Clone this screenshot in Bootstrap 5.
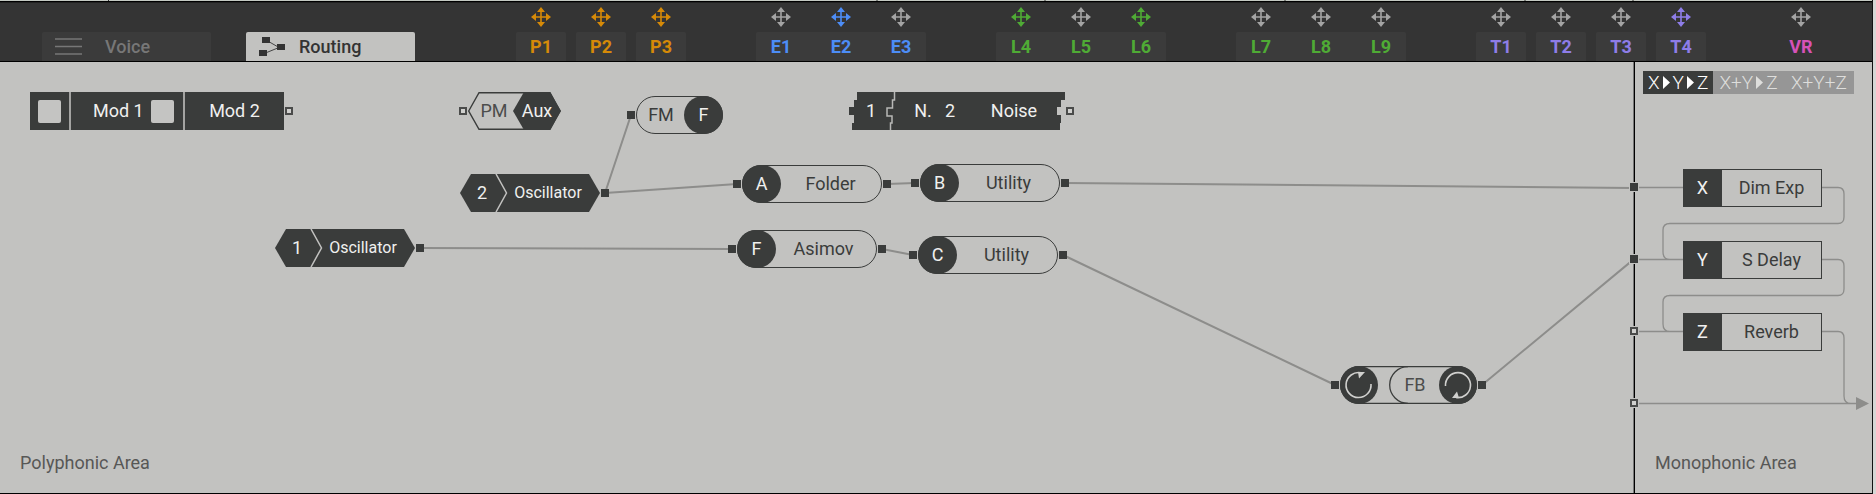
<!DOCTYPE html>
<html lang="en">
<head>
<meta charset="utf-8">
<meta name="viewport" content="width=device-width, initial-scale=1">
<title>Routing</title>
<link href="https://cdn.jsdelivr.net/npm/bootstrap@5.3.0/dist/css/bootstrap.min.css" rel="stylesheet">
<style>
:root { --ink:#3a3c3b; --pale:#c2c2c0; --wire:#8d8d8b; }
body { font-family:Roboto,sans-serif; font-size:18px; line-height:24px; color:var(--ink); background:#d6d6d4; padding-right:3px; }
button { font:inherit; color:inherit; background:none; border:0; padding:0; }
.frame { border-right:1px solid #111; }
.strip { height:2px; background:#c3c8c1; border-bottom:1px solid #000; }
.topbar { display:grid; grid-template-columns:repeat(30,minmax(0,1fr)); padding:0 41px 0 31px; background:#343434; border-top:1px solid #222; border-bottom:1px solid #000; height:60px; }
.pane-tabs { grid-column:1 / span 7; gap:35px; padding:0 36px 0 11px; }
.pane-tab { flex:1 1 0; height:29px; border-radius:2px 2px 0 0; background:#3b3b3b; color:#777; font-weight:500; }
.pane-tab.active { background:var(--pale); color:#333; }
.pane-tab svg { margin:0 23px 0 13px; }
.pane-tab.active svg { margin:0 14px 0 13px; }
.macro { display:flex; flex-direction:column; align-items:center; justify-content:space-between; font-weight:700; font-size:18px; padding-top:4px; }
.macro svg { width:20px; height:20px; color:#a3a3a3; }
.macro.on svg { color:inherit; }
.macro span { align-self:stretch; height:29px; line-height:29px; background:#3b3b3b; margin:0 5px; border-radius:2px 2px 0 0; }
.macro.first span { margin-right:0; padding-right:5px; border-top-right-radius:0; }
.macro.mid span { margin:0; border-radius:0; }
.macro.last span { margin-left:0; padding-left:5px; border-top-left-radius:0; }
.macro.bare span { background:none; }
.c-p { color:#d68a08; } .c-e { color:#4d8df6; } .c-l { color:#4fab35; } .c-t { color:#8e7de8; } .c-v { color:#d552b8; }
.col-p { grid-column-start:9; } .col-e { grid-column-start:13; } .col-l { grid-column-start:17; } .col-l7 { grid-column-start:21; } .col-t { grid-column-start:25; } .col-v { grid-column-start:30; }
.board { border-bottom:1px solid #000; }
.poly, .mono { background:var(--pale); min-height:431px; }
.poly { border-right:1px solid #777; overflow:hidden; }
.mono { width:238px; border-left:1px solid #000; }
.cables { position:absolute; left:0; top:0; width:1640px; height:431px; }
.area-name { color:#575756; padding:0 20px 18px; }
/* graph nodes, placed freely on the canvas */
.node { position:absolute; display:flex; align-items:center; gap:1px; height:38px; }
.port { width:8px; height:8px; background:var(--ink); }
.port.open { background:#d0d0ce; border:2px solid #4a4b4a; }
.shape { position:relative; display:flex; align-items:center; height:38px; color:#f0f0ef; }
.shape > svg { position:absolute; left:0; top:0; width:100%; height:100%; }
.shape > span { position:relative; text-align:center; }
.shape > .dim { color:#4c4d4c; }
.pill { display:flex; align-items:center; height:38px; border:1px solid var(--ink); border-radius:19px; }
.knob { width:39px; height:38px; line-height:38px; margin:-1px; border-radius:19px; background:var(--ink); color:#f0f0ef; text-align:center; flex:none; }
.bars { display:flex; gap:2px; background:#a4a4a2; }
.bar-seg { height:38px; background:var(--ink); color:#f0f0ef; display:flex; align-items:center; justify-content:center; }
.seg-pad { width:39px; } .seg-name { width:112px; justify-content:space-between; padding:0 9px 0 22px; } .seg-end { width:99px; }
.pad { width:23px; height:23px; border-radius:2px; background:#c4c4c2; }
.w44 { width:44px; } .w46 { width:46px; } .w140 { width:140px; }
.w-aux { width:93px; } .w-fm { width:87px; } .w-fb { width:137px; } .w-noise { width:216px; }
.pm-name { width:52px; } .aux-name { width:34px; } .fb-name { width:100%; padding-left:13px; }
.noise-name { width:48px; margin:0 27px 0 auto; }
.osc { font-size:16px; }
.n-mod { left:30px; top:30px; } .n-pm { left:459px; top:30px; } .n-fm { left:627px; top:34px; } .n-noise { left:849px; top:30px; }
.n-osc2 { left:460px; top:112px; } .n-osc1 { left:275px; top:167px; }
.n-a { left:733px; top:103px; } .n-b { left:911px; top:102px; } .n-f { left:728px; top:168px; } .n-c { left:909px; top:174px; } .n-fb { left:1331px; top:304px; }
.mode { margin:9px 18px 0 8px; height:23px; font-weight:300; font-size:19px; background:#969696; color:#dededc; }
.mode button { flex:1 1 0; line-height:23px; }
.mode button.active { background:var(--ink); color:#fff; }
.mode svg { width:7px; height:13px; margin:0 3px; }
.fx { height:38px; border:1px solid var(--ink); background:var(--pale); }
.fx b { width:39px; font-weight:400; background:var(--ink); color:#f0f0ef; margin:-1px 0 -1px -1px; line-height:38px; text-align:center; }
.fx span { line-height:36px; text-align:center; }
.effects { gap:34px; margin:75px 50px 0 48px; position:relative; }
.wiring { position:absolute; left:0; top:0; width:237px; height:431px; }
.inlets { position:absolute; left:-6px; top:120px; display:flex; flex-direction:column; gap:62px; }
.inlets .port { outline:1px solid var(--pale); margin:1px; }
</style>
</head>
<body>
<svg width="0" height="0" class="position-absolute" aria-hidden="true">
  <symbol id="move" viewBox="0 0 20 20"><path d="M10 3V17M3 10H17" stroke="currentColor" stroke-width="1.6"/><path d="M10 0l4 5H6zM10 20l4-5H6zM0 10l5-4v8zM20 10l-5-4v8z" fill="currentColor"/></symbol>
  <symbol id="tri" viewBox="0 0 7 13"><path d="M0 0L7 6.500L0 13z" fill="currentColor"/></symbol>
</svg>
<div class="frame d-flex flex-column min-vh-100">
  <svg class="strip w-100 d-block" viewBox="0 0 1872 2" preserveAspectRatio="none"><path d="M108.500 0V2M877 0V2M1045 0V2M1285 0V2M1525 0V2M1633 0V2" stroke="#000"/></svg>
  <header class="topbar">
    <nav class="pane-tabs d-flex align-items-end">
      <button class="pane-tab d-flex align-items-center"><svg width="27" height="17"><path d="M0 1H27M0 8.500H27M0 16H27" stroke="#777" stroke-width="1.500"/></svg>Voice</button>
      <button class="pane-tab active d-flex align-items-center"><svg width="26" height="20"><path d="M7 3L20 10.500L4 17" stroke="#444" fill="none"/><path d="M3 0h8v6H3zM18 7h8v6h-8zM0 13h8v6H0z" fill="#333"/></svg>Routing</button>
    </nav>
    <button class="macro c-p on col-p"><svg><use href="#move"/></svg><span>P1</span></button>
    <button class="macro c-p on"><svg><use href="#move"/></svg><span>P2</span></button>
    <button class="macro c-p on"><svg><use href="#move"/></svg><span>P3</span></button>
    <button class="macro c-e first col-e"><svg><use href="#move"/></svg><span>E1</span></button>
    <button class="macro c-e on mid"><svg><use href="#move"/></svg><span>E2</span></button>
    <button class="macro c-e last"><svg><use href="#move"/></svg><span>E3</span></button>
    <button class="macro c-l on first col-l"><svg><use href="#move"/></svg><span>L4</span></button>
    <button class="macro c-l mid"><svg><use href="#move"/></svg><span>L5</span></button>
    <button class="macro c-l on last"><svg><use href="#move"/></svg><span>L6</span></button>
    <button class="macro c-l first col-l7"><svg><use href="#move"/></svg><span>L7</span></button>
    <button class="macro c-l mid"><svg><use href="#move"/></svg><span>L8</span></button>
    <button class="macro c-l last"><svg><use href="#move"/></svg><span>L9</span></button>
    <button class="macro c-t col-t"><svg><use href="#move"/></svg><span>T1</span></button>
    <button class="macro c-t"><svg><use href="#move"/></svg><span>T2</span></button>
    <button class="macro c-t"><svg><use href="#move"/></svg><span>T3</span></button>
    <button class="macro c-t on"><svg><use href="#move"/></svg><span>T4</span></button>
    <button class="macro c-v bare col-v"><svg><use href="#move"/></svg><span>VR</span></button>
  </header>
  <main class="board d-flex flex-grow-1">
    <section class="poly position-relative flex-grow-1 d-flex align-items-end">
      <svg class="cables" fill="none" stroke="#8d8d8b" stroke-width="2"><path d="M605 131L631 53M605 131L737 122M419 186L732 187M887 122L915 121M1065 121L1634 126M882 187L913 193M1063 193L1335 323M1482 323L1634 197"/></svg>

      <div class="node n-mod">
        <div class="bars">
          <div class="bar-seg seg-pad"><i class="pad"></i></div>
          <div class="bar-seg seg-name">Mod 1<i class="pad"></i></div>
          <div class="bar-seg seg-end">Mod 2</div>
        </div>
        <i class="port open"></i>
      </div>

      <div class="node n-pm"><i class="port open"></i>
        <div class="shape w-aux"><svg viewBox="0 0 93 38"><path d="M.7 19L11 .700H82L92 19L82 37.300H11z" fill="none" stroke="#3a3c3b" stroke-width="1.400"/><path d="M45 19L56 0H82L93 19L82 38H56z" fill="#3a3c3b"/></svg>
          <span class="dim pm-name">PM</span><span class="aux-name">Aux</span></div>
      </div>

      <div class="node n-fm"><i class="port"></i><div class="pill w-fm"><span class="flex-grow-1 text-center">FM</span><span class="knob">F</span></div></div>

      <div class="node n-noise">
        <div class="shape w-noise"><svg viewBox="0 0 216 38"><path d="M8 0H216V8H212V15H208V23H212V31H211V38H3V31H5V23H0V15H5V8H8z" fill="#3a3c3b"/><path d="M45.500 0V8H43.500V16H38V24H43V31H41.500V38" fill="none" stroke="#b8b8b6" stroke-width="1.500"/></svg>
          <span class="w44">1</span><span class="ms-2 w44">N.</span><span>2</span><span class="noise-name">Noise</span></div>
        <i class="port open"></i>
      </div>

      <div class="node n-osc2"><div class="shape w140"><svg viewBox="0 0 140 38"><path d="M0 19L11 0H129L140 19L129 38H11z" fill="#3a3c3b"/><path d="M36 0L46.500 19L36 38" fill="none" stroke="#c2c2c0" stroke-width="1.500"/></svg><span class="w44">2</span><span class="osc flex-grow-1 pe-2">Oscillator</span></div><i class="port"></i></div>
      <div class="node n-osc1"><div class="shape w140"><svg viewBox="0 0 140 38"><path d="M0 19L11 0H129L140 19L129 38H11z" fill="#3a3c3b"/><path d="M36 0L46.500 19L36 38" fill="none" stroke="#c2c2c0" stroke-width="1.500"/></svg><span class="w44">1</span><span class="osc flex-grow-1 pe-2">Oscillator</span></div><i class="port"></i></div>

      <div class="node n-a"><i class="port"></i><div class="pill w140"><span class="knob">A</span><span class="flex-grow-1 text-center">Folder</span></div><i class="port"></i></div>
      <div class="node n-b"><i class="port"></i><div class="pill w140"><span class="knob">B</span><span class="flex-grow-1 text-center">Utility</span></div><i class="port"></i></div>
      <div class="node n-f"><i class="port"></i><div class="pill w140"><span class="knob">F</span><span class="flex-grow-1 text-center pe-1">Asimov</span></div><i class="port"></i></div>
      <div class="node n-c"><i class="port"></i><div class="pill w140"><span class="knob">C</span><span class="flex-grow-1 text-center">Utility</span></div><i class="port"></i></div>

      <div class="node n-fb"><i class="port"></i>
        <div class="shape w-fb"><svg viewBox="0 0 137 38" fill="none" stroke="#3a3c3b" stroke-width="1.300"><rect x=".7" y=".7" width="135.600" height="36.600" rx="18.300"/><path d="M68 .700A18.300 18.300 0 0 0 68 37.300"/><circle cx="19" cy="19" r="19" fill="#3a3c3b" stroke="none"/><circle cx="118" cy="19" r="19" fill="#3a3c3b" stroke="none"/><path d="M31 18A12.500 12.500 0 1 1 21 6.800M105.500 20A12.500 12.500 0 1 1 116 31.500" stroke="#d0d0ce" stroke-width="1.600"/><path d="M18 6L25 6L19 12.500zM119 32L112 32L117 25.500z" fill="#d0d0ce" stroke="none"/></svg>
          <span class="dim fb-name">FB</span></div>
        <i class="port"></i></div>

      <div class="area-name">Polyphonic Area</div>
    </section>

    <aside class="mono position-relative flex-shrink-0 d-flex flex-column">
      <svg class="wiring" fill="none" stroke="#8d8d8b" stroke-width="1.300"><path d="M4 125.500H48M4 197.500H48M4 269.500H48M4 341.500H222M187 125.500H203Q209 125.500 209 132V155Q209 161.500 203 161.500H35Q28 161.500 28 168V190Q28 197.500 35 197.500M187 197.500H203Q209 197.500 209 204V227Q209 233.500 203 233.500H35Q28 233.500 28 240V262Q28 269.500 35 269.500M187 269.500H203Q209 269.500 209 276V334Q209 341.500 216 341.500"/><path d="M221 335L234 341.500L221 348z" fill="#8d8d8b" stroke="none"/></svg>
      <div class="inlets"><i class="port"></i><i class="port"></i><i class="port open"></i><i class="port open"></i></div>
      <div class="mode d-flex">
        <button class="active d-flex align-items-center justify-content-center">X<svg><use href="#tri"/></svg>Y<svg><use href="#tri"/></svg>Z</button>
        <button class="d-flex align-items-center justify-content-center">X+Y<svg><use href="#tri"/></svg>Z</button>
        <button>X+Y+Z</button>
      </div>
      <div class="effects d-flex flex-column">
        <div class="fx d-flex"><b>X</b><span class="flex-grow-1">Dim Exp</span></div>
        <div class="fx d-flex"><b>Y</b><span class="flex-grow-1">S Delay</span></div>
        <div class="fx d-flex"><b>Z</b><span class="flex-grow-1">Reverb</span></div>
      </div>
      <div class="area-name mt-auto">Monophonic Area</div>
    </aside>
  </main>
</div>
<script src="https://cdn.jsdelivr.net/npm/bootstrap@5.3.0/dist/js/bootstrap.bundle.min.js"></script>
</body>
</html>
